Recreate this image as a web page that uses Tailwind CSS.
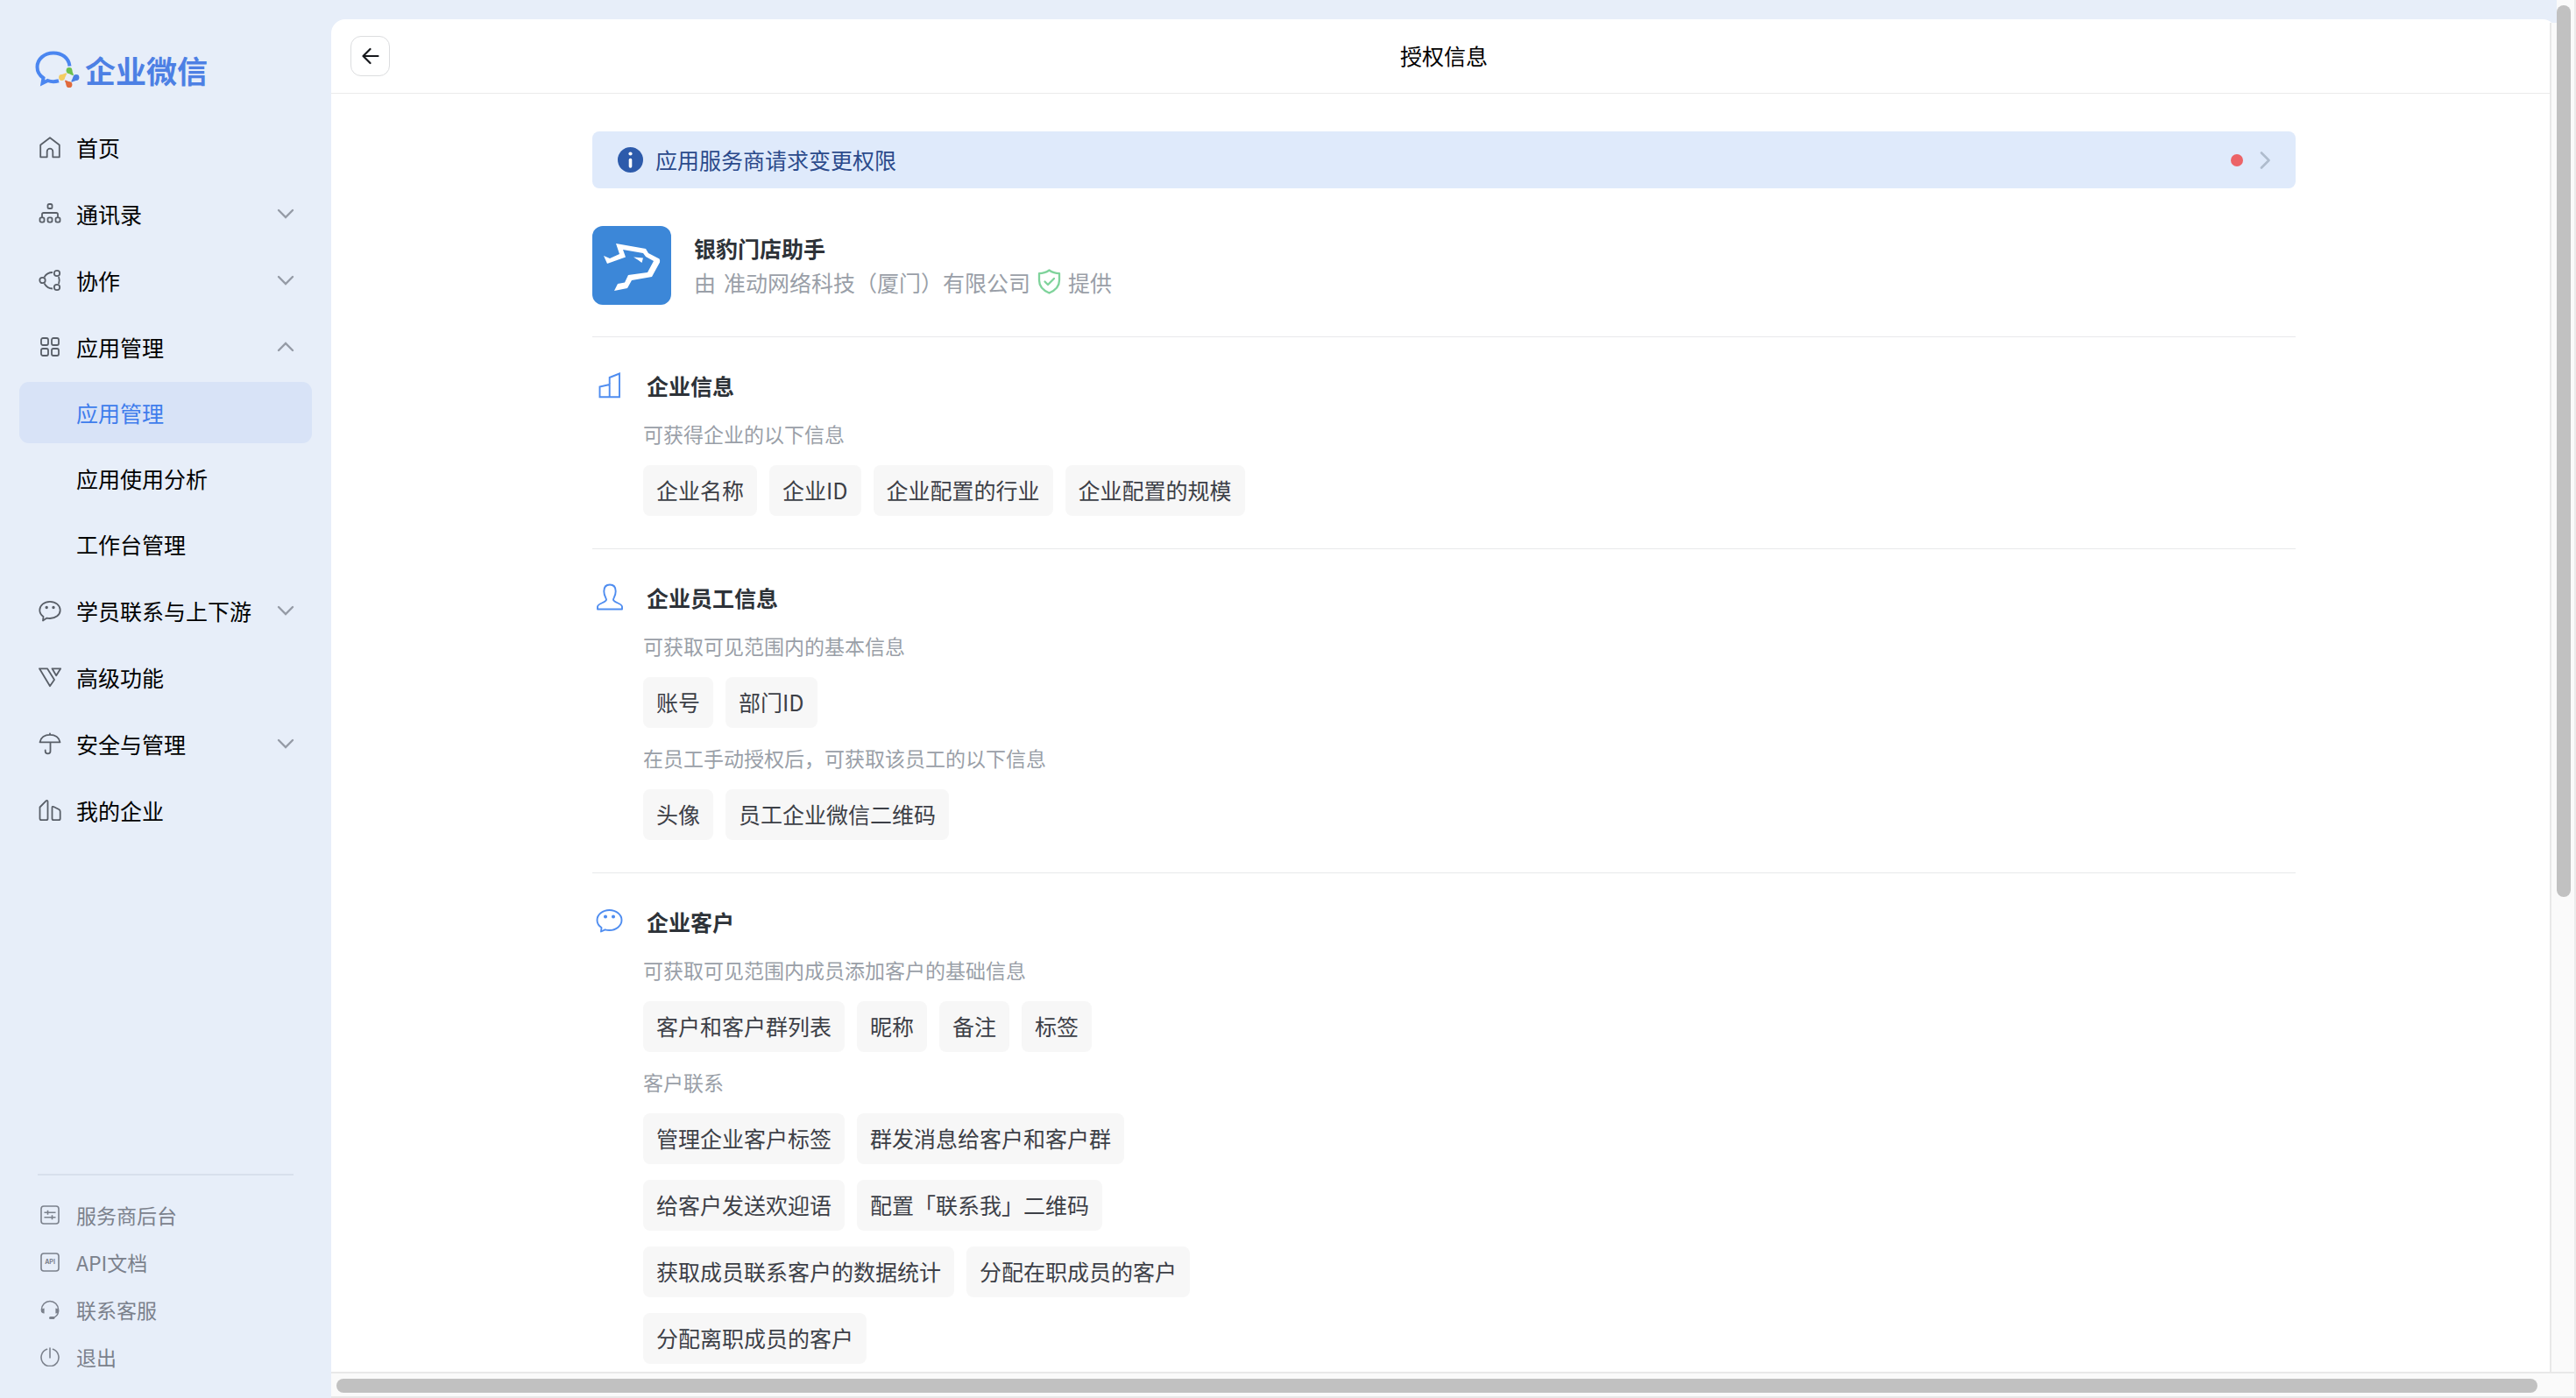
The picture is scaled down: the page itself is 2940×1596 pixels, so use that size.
<!DOCTYPE html>
<html lang="zh-CN">
<head>
    <meta charset="UTF-8">
    <meta name="viewport" content="width=device-width, initial-scale=1.0">
    <title>企业微信 - 授权信息</title>
    <script src="https://cdn.jsdelivr.net/npm/@tailwindcss/browser@4"></script>
</head>
<body class="flex h-screen overflow-hidden bg-[#e7eef9] font-['Noto_Sans_CJK_SC',sans-serif] text-[25px] leading-[36px] text-black">

    <!-- Sidebar -->
    <aside class="flex w-[378px] shrink-0 flex-col px-[22px] pt-[54px] pb-[20px]">
        <a href="#" class="flex h-[52px] items-center gap-[6px] pl-[18px] text-[35px] font-bold text-[#4d80e4]">
            <svg class="h-[44px] w-[51px]" viewBox="0 0 51 44" fill="none">
                <path d="M39.500 17.500C38.500 8 30.500 2.500 21 2.500 10.500 2.500 2.500 9.500 2.500 18.500c0 5 2.500 9.500 7 12.500L8.500 37l6-3c4 1.500 8 1.500 12.500.3" stroke="#4b86f0" stroke-width="4"/>
                <g fill="#6cc04f"><circle cx="39" cy="22.500" r="3.400"/><path d="M37 25.200l6.200 3 .8-.8-2.200-6z"/></g>
                <g fill="#4b7fe3"><circle cx="47" cy="30.500" r="3.400"/><path d="M44.200 28.500l-3 6.500.8.800 6-2.200z"/></g>
                <g fill="#e06a3c"><circle cx="39" cy="38.700" r="3.400"/><path d="M41.500 36.500l-6.700-3-.8.800 2.200 6z"/></g>
                <g fill="#f3cc62"><circle cx="30.500" cy="30.500" r="3.400"/><path d="M33.300 32.500l3-6.500-.8-.8-6 2.200z"/></g>
            </svg>
            企业微信
        </a>

        <nav class="mt-[27px]">
            <ul class="flex flex-col gap-[6px]">
                <li>
                    <a href="#" class="flex h-[70px] items-center gap-[17px] pr-[20px] pb-px pl-[22px]">
                        <svg class="size-[26px] text-[#595f68]" viewBox="0 0 26 26" fill="none" stroke="currentColor" stroke-width="1.800" stroke-linejoin="round"><path d="M2.200 24.300V10.500L13 2.200l10.800 8.300v13.800h-7.500V18a3.300 3.300 0 0 0-6.600 0v6.300z"/></svg>
                        首页
                    </a>
                </li>
                <li>
                    <button class="flex h-[70px] w-full items-center gap-[17px] pr-[20px] pb-px pl-[22px]">
                        <svg class="size-[26px] text-[#595f68]" viewBox="0 0 26 26" fill="none" stroke="currentColor" stroke-width="1.800"><rect x="10.500" y="2" width="5" height="5" rx="1.600"/><rect x="1.500" y="17.300" width="5" height="5.400" rx="1.600"/><rect x="10.500" y="17.300" width="5" height="5.400" rx="1.600"/><rect x="19.500" y="17.300" width="5" height="5.400" rx="1.600"/><path d="M4 17v-3.200q0-1.800 1.800-1.800h14.400q1.800 0 1.800 1.800V17"/></svg>
                        通讯录
                        <svg class="ml-auto h-3 w-5 text-[#959ba6]" viewBox="0 0 20 12" fill="none" stroke="currentColor" stroke-width="2.400" stroke-linecap="round"><path d="M2 2l8 8 8-8"/></svg>
                    </button>
                </li>
                <li>
                    <button class="flex h-[70px] w-full items-center gap-[17px] pr-[20px] pb-px pl-[22px]">
                        <svg class="size-[26px] text-[#595f68]" viewBox="0 0 26 26" fill="none" stroke="currentColor" stroke-width="1.800"><circle cx="4.500" cy="13" r="3.200"/><circle cx="21" cy="5" r="3.200"/><circle cx="21" cy="21" r="3.200"/><path d="M6.500 9.500C8.500 6 11.500 4 16 4M6.500 16.500C8.500 20 11.500 22.500 16 22.500M23 9q1.500 4 0 8"/></svg>
                        协作
                        <svg class="ml-auto h-3 w-5 text-[#959ba6]" viewBox="0 0 20 12" fill="none" stroke="currentColor" stroke-width="2.400" stroke-linecap="round"><path d="M2 2l8 8 8-8"/></svg>
                    </button>
                </li>
                <li class="flex flex-col gap-[5px]">
                    <button class="flex h-[70px] w-full items-center gap-[17px] pr-[20px] pb-px pl-[22px]">
                        <svg class="size-[26px] text-[#595f68]" viewBox="0 0 26 26" fill="none" stroke="currentColor" stroke-width="1.800"><rect x="3" y="3" width="8" height="8" rx="2"/><rect x="15" y="3" width="8" height="8" rx="2"/><rect x="3" y="15" width="8" height="8" rx="2"/><rect x="15" y="15" width="8" height="8" rx="2"/></svg>
                        应用管理
                        <svg class="ml-auto h-3 w-5 text-[#959ba6]" viewBox="0 0 20 12" fill="none" stroke="currentColor" stroke-width="2.400" stroke-linecap="round"><path d="M2 10l8-8 8 8"/></svg>
                    </button>
                    <ul class="flex flex-col gap-[5px]">
                        <li><a href="#" class="flex h-[70px] items-center rounded-[11px] bg-[#d8e3f7] pb-px pl-[65px] text-[#3f7dec]">应用管理</a></li>
                        <li><a href="#" class="flex h-[70px] items-center pb-px pl-[65px]">应用使用分析</a></li>
                        <li><a href="#" class="flex h-[70px] items-center pb-px pl-[65px]">工作台管理</a></li>
                    </ul>
                </li>
                <li>
                    <button class="flex h-[70px] w-full items-center gap-[17px] pr-[20px] pb-px pl-[22px]">
                        <svg class="size-[26px] text-[#595f68]" viewBox="0 0 26 26" fill="none" stroke="currentColor" stroke-width="1.800" stroke-linejoin="round"><path d="M5 24.500l.5-4.500C2.700 18 1.300 15.500 1.300 12.500 1.300 7 6.500 2.800 13 2.800S24.700 7 24.700 12.500 19.500 22 13 22q-2 0-3.500-.4z"/><circle cx="9.200" cy="9.500" r=".8" fill="currentColor"/><circle cx="17" cy="9.500" r=".8" fill="currentColor"/></svg>
                        学员联系与上下游
                        <svg class="ml-auto h-3 w-5 text-[#959ba6]" viewBox="0 0 20 12" fill="none" stroke="currentColor" stroke-width="2.400" stroke-linecap="round"><path d="M2 2l8 8 8-8"/></svg>
                    </button>
                </li>
                <li>
                    <a href="#" class="flex h-[70px] items-center gap-[17px] pr-[20px] pb-px pl-[22px]">
                        <svg class="size-[26px] text-[#595f68]" viewBox="0 0 26 26" fill="none" stroke="currentColor" stroke-width="1.800" stroke-linejoin="round"><path d="M1 3.300h9l8 12.700-5 7.200zM15.500 3.300H25.200l-5 8z"/></svg>
                        高级功能
                    </a>
                </li>
                <li>
                    <button class="flex h-[70px] w-full items-center gap-[17px] pr-[20px] pb-px pl-[22px]">
                        <svg class="size-[26px] text-[#595f68]" viewBox="0 0 26 26" fill="none" stroke="currentColor" stroke-width="1.800" stroke-linejoin="round" stroke-linecap="round"><path d="M1.500 11.300C2.500 6 7 2.800 13 2.800S23.500 6 24.500 11.300zM13 1.500v1M13.500 11.500V21.500a2.900 2.900 0 0 1-5.800 0v-1"/></svg>
                        安全与管理
                        <svg class="ml-auto h-3 w-5 text-[#959ba6]" viewBox="0 0 20 12" fill="none" stroke="currentColor" stroke-width="2.400" stroke-linecap="round"><path d="M2 2l8 8 8-8"/></svg>
                    </button>
                </li>
                <li>
                    <a href="#" class="flex h-[70px] items-center gap-[17px] pr-[20px] pb-px pl-[22px]">
                        <svg class="size-[26px] text-[#595f68]" viewBox="0 0 26 26" fill="none" stroke="currentColor" stroke-width="1.800" stroke-linejoin="round"><path d="M1.500 9.500L8.500 2.300q2-1 2 1V22.500q0 1.700-1.700 1.700H3.200q-1.700 0-1.700-1.700zM15.500 10q0-1.700 1.700-1l6 3q1.500.8 1.500 2.500v8q0 1.700-1.700 1.700h-5.800q-1.700 0-1.700-1.700z"/></svg>
                        我的企业
                    </a>
                </li>
            </ul>
        </nav>

        <ul class="mx-[21px] mt-auto border-t-2 border-[#d8e0ec] pt-[18px] text-[23px] text-[#7b818c]">
            <li>
                <a href="#" class="flex h-[54px] items-center gap-[19px] pl-[3px]">
                    <svg class="size-[22px]" viewBox="0 0 22 22" fill="none" stroke="currentColor" stroke-width="1.600"><rect x="1" y="1" width="20" height="20" rx="3"/><path d="M4.500 8.300h13M4.500 13.700h13M8.500 5.800v5M13.500 11.200v5"/></svg>
                    服务商后台
                </a>
            </li>
            <li>
                <a href="#" class="flex h-[54px] items-center gap-[19px] pl-[3px]">
                    <svg class="size-[22px]" viewBox="0 0 22 22" fill="none" stroke="currentColor" stroke-width="1.600"><rect x="1" y="1" width="20" height="20" rx="3"/><text x="11" y="12.500" text-anchor="middle" font-size="7" font-weight="700" font-family="Inter, sans-serif" fill="currentColor" stroke="none">API</text></svg>
                    API文档
                </a>
            </li>
            <li>
                <a href="#" class="flex h-[54px] items-center gap-[19px] pl-[3px]">
                    <svg class="size-[22px]" viewBox="0 0 22 22" fill="none" stroke="currentColor" stroke-width="1.600"><path d="M1.500 12v-1a9.500 9.500 0 0 1 19 0v2.500q-.5 5.500-6.500 7"/><path d="M4.600 9.500v6Q.8 15 .8 12.500t3.800-3zM17.400 9.500v6q3.800-.5 3.800-3t-3.800-3z" fill="currentColor" stroke="none"/><rect x="10" y="19" width="6.500" height="3" rx="1.500" fill="currentColor" stroke="none"/></svg>
                    联系客服
                </a>
            </li>
            <li>
                <a href="#" class="flex h-[54px] items-center gap-[19px] pl-[3px]">
                    <svg class="size-[22px]" viewBox="0 0 22 22" fill="none" stroke="currentColor" stroke-width="1.600" stroke-linecap="round"><path d="M7.500 2.300a10 10 0 1 0 7 0M11 1v11"/></svg>
                    退出
                </a>
            </li>
        </ul>
    </aside>

    <!-- Main panel -->
    <div class="relative flex min-w-0 flex-1 flex-col pt-[22px]">
        <main class="mr-[22px] flex min-h-0 flex-1 flex-col overflow-hidden rounded-t-2xl bg-white">
            <header class="flex h-[85px] shrink-0 items-center border-b border-[#ebebeb] px-[22px]">
                <button aria-label="返回" class="flex h-[46px] w-[45px] items-center justify-center rounded-xl border border-[#dcdddf] bg-white">
                    <svg class="size-5" viewBox="0 0 20 20" fill="none" stroke="#16181c" stroke-width="2.200" stroke-linecap="round" stroke-linejoin="round"><path d="M18.500 10H1.500M9.500 2l-8 8 8 8"/></svg>
                </button>
                <h1 class="flex-1 pr-[45px] pb-[2px] text-center">授权信息</h1>
            </header>

            <div class="mx-auto mt-[43px] w-full max-w-[1944px]">
                <a href="#" class="flex h-[65px] items-center rounded-lg bg-[#dfeafb] px-[29px] text-[#2b4a8b]">
                    <svg class="size-[29px]" viewBox="0 0 29 29"><circle cx="14.500" cy="14.500" r="14.500" fill="#2d5bab"/><circle cx="14.500" cy="7.500" r="2.100" fill="#fff"/><path d="M14.500 14.500v7.500" stroke="#fff" stroke-width="3.600" stroke-linecap="round"/></svg>
                    <span class="ml-[14px] pb-[2px]">应用服务商请求变更权限</span>
                    <span class="ml-auto size-[14px] rounded-full bg-[#ec6367]"></span>
                    <svg class="ml-[19px] h-5 w-3" viewBox="0 0 12 20" fill="none" stroke="#afbccd" stroke-width="2.600" stroke-linecap="round" stroke-linejoin="round"><path d="M2 1.500l8.500 8.500L2 18.500"/></svg>
                </a>

                <div class="mt-[43px] mb-[36px] flex items-center gap-[26px]">
                    <svg class="size-[90px] rounded-xl bg-[#3c87d8]" viewBox="0 0 90 90" fill="#fff"><path d="M13 34l7 3 11-5-4-12 34 6 3 5 12.500 6.500q1 1.500.5 4L68 58l-23 4-5 9-15 3 4-8 8-1.500L41 56l22-3 7-13-9-5-3-4-23-4 3 8.500L17 43z"/><path d="M47 35.500l11 1-1.500 5.500-4-3z"/></svg>
                    <div class="pb-[2px]">
                        <h2 class="font-bold text-[#2d3238]">银豹门店助手</h2>
                        <p class="mt-[3px] flex items-center text-[#9a9fa8]">
                            <span class="mr-[9px]">由</span>
                            <span>准动网络科技（厦门）有限公司</span>
                            <svg class="mx-[8px] h-[29px] w-[27px]" viewBox="0 0 27 29" fill="none" stroke="#7fd39b" stroke-width="2.300" stroke-linecap="round" stroke-linejoin="round"><path d="M13.500 1.500Q18.500 5 25 5.200V13c0 7-4.500 11.500-11.500 14.500C6.500 24.500 2 20 2 13V5.200Q8.500 5 13.500 1.500z"/><path d="M8.500 14.500l3.500 3.500 7-7"/></svg>
                            提供
                        </p>
                    </div>
                </div>

                <section class="border-t border-[#e8e9eb] pt-[37px] pb-[37px]">
                    <h2 class="flex items-center gap-[12px] pl-[4px] font-bold text-[#2d3238]">
                        <svg class="h-[32px] w-[46px]" viewBox="0 0 46 32" fill="none" stroke="#4f8df0" stroke-width="1.900"><path d="M4.500 29.300V17.500L15.700 15V29.300zM15.700 29.300V7L27 2.500V29.300z"/></svg>
                        企业信息
                    </h2>
                    <div class="ml-[58px] max-w-[760px]">
                        <p class="mt-[20px] text-[23px] leading-[34px] text-[#9a9fa8]">可获得企业的以下信息</p>
                        <ul class="mt-[19px] flex flex-wrap gap-x-[14px] gap-y-[18px] text-[#3d4047]">
                            <li class="rounded-lg bg-[#f7f7f7] px-[15px] pt-[10px] pb-[12px]">企业名称</li>
                            <li class="rounded-lg bg-[#f7f7f7] px-[15px] pt-[10px] pb-[12px]">企业ID</li>
                            <li class="rounded-lg bg-[#f7f7f7] px-[15px] pt-[10px] pb-[12px]">企业配置的行业</li>
                            <li class="rounded-lg bg-[#f7f7f7] px-[15px] pt-[10px] pb-[12px]">企业配置的规模</li>
                        </ul>
                    </div>
                </section>

                <section class="border-t border-[#e8e9eb] pt-[37px] pb-[37px]">
                    <h2 class="flex items-center gap-[12px] pl-[4px] font-bold text-[#2d3238]">
                        <svg class="h-[32px] w-[46px]" viewBox="0 0 46 32" fill="none" stroke="#4f8df0" stroke-width="1.900" stroke-linejoin="round"><path d="M2 29.500V26.500C2.500 22.500 12 22 12 18.500 12 16.500 9.300 14.500 9.300 9 9.300 4.500 11.500 1.500 16 1.500S22.700 4.500 22.700 9C22.700 14.500 20 16.500 20 18.500 20 22 29.500 22.500 30 26.500v3z"/></svg>
                        企业员工信息
                    </h2>
                    <div class="ml-[58px] max-w-[760px]">
                        <p class="mt-[20px] text-[23px] leading-[34px] text-[#9a9fa8]">可获取可见范围内的基本信息</p>
                        <ul class="mt-[19px] flex flex-wrap gap-x-[14px] gap-y-[18px] text-[#3d4047]">
                            <li class="rounded-lg bg-[#f7f7f7] px-[15px] pt-[10px] pb-[12px]">账号</li>
                            <li class="rounded-lg bg-[#f7f7f7] px-[15px] pt-[10px] pb-[12px]">部门ID</li>
                        </ul>
                        <p class="mt-[17px] text-[23px] leading-[34px] text-[#9a9fa8]">在员工手动授权后，可获取该员工的以下信息</p>
                        <ul class="mt-[19px] flex flex-wrap gap-x-[14px] gap-y-[18px] text-[#3d4047]">
                            <li class="rounded-lg bg-[#f7f7f7] px-[15px] pt-[10px] pb-[12px]">头像</li>
                            <li class="rounded-lg bg-[#f7f7f7] px-[15px] pt-[10px] pb-[12px]">员工企业微信二维码</li>
                        </ul>
                    </div>
                </section>

                <section class="border-t border-[#e8e9eb] pt-[37px] pb-[37px]">
                    <h2 class="flex items-center gap-[12px] pl-[4px] font-bold text-[#2d3238]">
                        <svg class="h-[32px] w-[46px]" viewBox="0 0 46 32" fill="none" stroke="#4f8df0" stroke-width="1.900" stroke-linejoin="round"><path d="M6 27.500l.5-4.500C3.500 21 1.500 18 1.500 14.500 1.500 8 8 3 15.500 3s14 5 14 11.500-6.500 11.500-14 11.500q-2.500 0-5-.7z"/><circle cx="11" cy="10.500" r="1.100" fill="#4f8df0"/><circle cx="20" cy="10.500" r="1.100" fill="#4f8df0"/></svg>
                        企业客户
                    </h2>
                    <div class="ml-[58px] max-w-[760px]">
                        <p class="mt-[20px] text-[23px] leading-[34px] text-[#9a9fa8]">可获取可见范围内成员添加客户的基础信息</p>
                        <ul class="mt-[19px] flex flex-wrap gap-x-[14px] gap-y-[18px] text-[#3d4047]">
                            <li class="rounded-lg bg-[#f7f7f7] px-[15px] pt-[10px] pb-[12px]">客户和客户群列表</li>
                            <li class="rounded-lg bg-[#f7f7f7] px-[15px] pt-[10px] pb-[12px]">昵称</li>
                            <li class="rounded-lg bg-[#f7f7f7] px-[15px] pt-[10px] pb-[12px]">备注</li>
                            <li class="rounded-lg bg-[#f7f7f7] px-[15px] pt-[10px] pb-[12px]">标签</li>
                        </ul>
                        <p class="mt-[17px] text-[23px] leading-[34px] text-[#9a9fa8]">客户联系</p>
                        <ul class="mt-[19px] flex flex-wrap gap-x-[14px] gap-y-[18px] text-[#3d4047]">
                            <li class="rounded-lg bg-[#f7f7f7] px-[15px] pt-[10px] pb-[12px]">管理企业客户标签</li>
                            <li class="rounded-lg bg-[#f7f7f7] px-[15px] pt-[10px] pb-[12px]">群发消息给客户和客户群</li>
                            <li class="rounded-lg bg-[#f7f7f7] px-[15px] pt-[10px] pb-[12px]">给客户发送欢迎语</li>
                            <li class="rounded-lg bg-[#f7f7f7] px-[15px] pt-[10px] pb-[12px]">配置「联系我」二维码</li>
                            <li class="rounded-lg bg-[#f7f7f7] px-[15px] pt-[10px] pb-[12px]">获取成员联系客户的数据统计</li>
                            <li class="rounded-lg bg-[#f7f7f7] px-[15px] pt-[10px] pb-[12px]">分配在职成员的客户</li>
                            <li class="rounded-lg bg-[#f7f7f7] px-[15px] pt-[10px] pb-[12px]">分配离职成员的客户</li>
                        </ul>
                    </div>
                </section>
            </div>
        </main>

        <!-- Scrollbars over the panel edges -->
        <div class="absolute top-[26px] right-[22px] bottom-[30px] w-[8px] border-l-2 border-[#e8e8e8] bg-[#fafafa]"></div>
        <div class="absolute top-0 right-0 bottom-0 w-[22px] border-r-2 border-[#ebebeb] bg-[#fafafa] pt-[6px]">
            <div class="h-[64%] w-4 rounded-full bg-[#c1c1c1]"></div>
        </div>
        <div class="absolute right-[2px] bottom-0 left-0 h-[30px] border-y-2 border-[#e8e8e8] bg-[#fafafa] pt-[6px] pr-[42px] pl-[6px]">
            <div class="h-4 rounded-full bg-[#c1c1c1]"></div>
        </div>
    </div>
</body>
</html>
